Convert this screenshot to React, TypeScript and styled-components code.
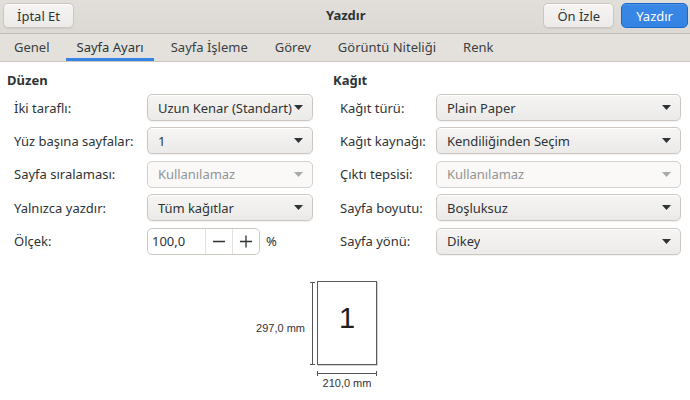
import React from "react";
import styled, { createGlobalStyle, css } from "styled-components";

const Global = createGlobalStyle`
  html, body { margin: 0; padding: 0; background: #ffffff; }
  body { font-family: "Noto Sans", "Open Sans", sans-serif; font-size: 13px; color: #2e3436; }
  * { box-sizing: border-box; }
`;

const Window = styled.div`
  width: 690px;
  height: 400px;
  display: flex;
  flex-direction: column;
  background: #ffffff;
  overflow: hidden;
`;

const HeaderBar = styled.div`
  height: 34px;
  flex: none;
  display: flex;
  align-items: flex-start;
  padding: 3px 2px 0 3px;
  background: linear-gradient(to top, #dcd9d5, #e2dfdb);
  border-bottom: 1px solid #c4bdb6;
`;

const Title = styled.div`
  flex: 1;
  text-align: center;
  font-weight: 700;
  line-height: 25px;
  padding-left: 74px;
`;

const HeaderActions = styled.div`
  display: flex;
  gap: 7px;
`;

const Button = styled.button<{ $primary?: boolean }>`
  height: 25px;
  padding: 0 13px;
  font: inherit;
  line-height: 22px;
  border-radius: 5px;
  border: 1px solid #cdc7c2;
  color: #2e3436;
  background: linear-gradient(to top, #edebe9 2px, #f6f5f4);
  box-shadow: inset 0 1px #ffffff, 0 1px 1px rgba(0, 0, 0, 0.07);
  ${(p) =>
    p.$primary &&
    css`
      padding: 0 14px;
      border-color: #1b6acb;
      color: #ffffff;
      background: linear-gradient(to top, #3584e4 2px, #3987e5);
      box-shadow: inset 0 1px rgba(255, 255, 255, 0.1);
    `}
`;

const TabBar = styled.div`
  height: 28px;
  flex: none;
  display: flex;
  padding-left: 0.5px;
  background: #e4e1dd;
  border-bottom: 1px solid #cdc7c2;
`;

const Tab = styled.div<{ $active?: boolean }>`
  line-height: 27px;
  white-space: nowrap;
  color: ${(p) => (p.$active ? "#2e3436" : "#3a3f41")};
  box-shadow: ${(p) => (p.$active ? "inset 0 -3px #3584e4" : "none")};
  margin: 0 ${(p) => (p.$active ? "3px" : "0")};
  padding: 0 ${(p) => (p.$active ? "10.5px" : "13.5px")};
`;

const Content = styled.div`
  flex: 1;
  display: flex;
  flex-direction: column;
`;

const Columns = styled.div`
  display: flex;
  gap: 20px;
  padding: 8px 9px 0 7px;
`;

const Section = styled.div<{ $width?: number }>`
  ${(p) => (p.$width ? `width: ${p.$width}px;` : "flex: 1;")}
  display: flex;
  flex-direction: column;
  gap: 4px;
`;

const Heading = styled.div`
  font-weight: 700;
  line-height: 20px;
`;

const Grid = styled.div<{ $labelWidth: number }>`
  display: grid;
  grid-template-columns: ${(p) => p.$labelWidth}px minmax(0, 1fr);
  column-gap: 9px;
  row-gap: 6.4px;
  padding-left: 7px;
  align-items: center;
`;

const Label = styled.div`
  white-space: nowrap;
`;

const Combo = styled.div<{ $disabled?: boolean }>`
  height: 27px;
  display: flex;
  align-items: center;
  justify-content: space-between;
  gap: 2px;
  padding: 0 9px 0 10px;
  border-radius: 5px;
  border: 1px solid #cdc7c2;
  background: linear-gradient(to top, #edebe9 2px, #f6f5f4);
  box-shadow: inset 0 1px #ffffff, 0 1px 1px rgba(0, 0, 0, 0.06);
  white-space: nowrap;
  ${(p) =>
    p.$disabled &&
    css`
      color: #929595;
      background: #faf9f8;
      border-color: #d5d0cc;
      box-shadow: none;
    `}
`;

const ComboText = styled.span`
  min-width: 0;
  overflow: hidden;
  letter-spacing: -0.05px;
`;

const ArrowIcon = ({ disabled }: { disabled?: boolean }) => (
  <svg width="9" height="5" viewBox="0 0 9 5" style={{ flex: "none" }}>
    <path d="M0 0 L9 0 L4.5 5 Z" fill={disabled ? "#a7aaab" : "#2e3436"} />
  </svg>
);

const SpinRow = styled.div`
  display: flex;
  align-items: center;
  gap: 6px;
`;

const Spin = styled.div`
  height: 27px;
  width: 113px;
  display: flex;
  border: 1px solid #cdc7c2;
  border-radius: 5px;
  background: #ffffff;
  overflow: hidden;
`;

const SpinValue = styled.div`
  flex: 1;
  padding-left: 4px;
  line-height: 25px;
`;

const SpinButton = styled.div`
  width: 27px;
  display: flex;
  align-items: center;
  justify-content: center;
  border-left: 1px solid #e3e0dd;
`;

const Preview = styled.div`
  flex: 1;
  display: grid;
  grid-template-columns: 1fr auto 1fr;
  align-items: start;
  padding: 26px 0 0 4px;
  font-family: "Liberation Sans", Arial, sans-serif;
  font-size: 11px;
  color: #333333;
`;

const VerticalDim = styled.div`
  display: flex;
  justify-content: flex-end;
  align-items: flex-start;
  gap: 4px;
`;

const DimText = styled.div`
  line-height: 13px;
`;

const VerticalText = styled(DimText)`
  margin-top: 41px;
`;

const PageColumn = styled.div`
  display: flex;
  flex-direction: column;
  align-items: center;
`;

const Page = styled.div`
  width: 60px;
  height: 84px;
  border: 1px solid #5a5a5a;
  background: #ffffff;
  box-shadow: 1px 1px 0 #d2d2d2;
  display: flex;
  align-items: center;
  justify-content: center;
  font-size: 29px;
  color: #1e1e1e;
  padding-bottom: 8px;
`;

const VDimLine = () => (
  <svg width="7" height="86" viewBox="0 0 7 86">
    <path d="M3.5 1 V84 M1 1.5 H6 M1 83.5 H6" stroke="#555" strokeWidth="1" fill="none" />
  </svg>
);

const HDimLine = () => (
  <svg width="62" height="7" viewBox="0 0 62 7" style={{ marginTop: 5 }}>
    <path d="M1 3.5 H61 M1.5 1 V6 M60.5 1 V6" stroke="#555" strokeWidth="1" fill="none" />
  </svg>
);

const MinusIcon = () => (
  <svg width="14" height="14" viewBox="0 0 14 14">
    <path d="M1 7.5 H13" stroke="#2e3436" strokeWidth="1.3" />
  </svg>
);

const PlusIcon = () => (
  <svg width="14" height="14" viewBox="0 0 14 14">
    <path d="M1 7.5 H13 M7 1.5 V13.5" stroke="#2e3436" strokeWidth="1.3" />
  </svg>
);

type Row = { label: string; value: string; disabled?: boolean };

const leftRows: Row[] = [
  { label: "İki taraflı:", value: "Uzun Kenar (Standart)" },
  { label: "Yüz başına sayfalar:", value: "1" },
  { label: "Sayfa sıralaması:", value: "Kullanılamaz", disabled: true },
  { label: "Yalnızca yazdır:", value: "Tüm kağıtlar" },
];

const rightRows: Row[] = [
  { label: "Kağıt türü:", value: "Plain Paper" },
  { label: "Kağıt kaynağı:", value: "Kendiliğinden Seçim" },
  { label: "Çıktı tepsisi:", value: "Kullanılamaz", disabled: true },
  { label: "Sayfa boyutu:", value: "Boşluksuz" },
  { label: "Sayfa yönü:", value: "Dikey" },
];

const tabs = ["Genel", "Sayfa Ayarı", "Sayfa İşleme", "Görev", "Görüntü Niteliği", "Renk"];

const ComboRow = ({ row }: { row: Row }) => (
  <>
    <Label>{row.label}</Label>
    <Combo $disabled={row.disabled}>
      <ComboText>{row.value}</ComboText>
      <ArrowIcon disabled={row.disabled} />
    </Combo>
  </>
);

export default function App() {
  return (
    <Window>
      <Global />
      <HeaderBar>
        <Button>İptal Et</Button>
        <Title>Yazdır</Title>
        <HeaderActions>
          <Button>Ön İzle</Button>
          <Button $primary>Yazdır</Button>
        </HeaderActions>
      </HeaderBar>
      <TabBar>
        {tabs.map((t) => (
          <Tab key={t} $active={t === "Sayfa Ayarı"}>
            {t}
          </Tab>
        ))}
      </TabBar>
      <Content>
        <Columns>
          <Section $width={306}>
            <Heading>Düzen</Heading>
            <Grid $labelWidth={124}>
              {leftRows.map((r) => (
                <ComboRow key={r.label} row={r} />
              ))}
              <Label>Ölçek:</Label>
              <SpinRow>
                <Spin>
                  <SpinValue>100,0</SpinValue>
                  <SpinButton>
                    <MinusIcon />
                  </SpinButton>
                  <SpinButton>
                    <PlusIcon />
                  </SpinButton>
                </Spin>
                <span>%</span>
              </SpinRow>
            </Grid>
          </Section>
          <Section>
            <Heading>Kağıt</Heading>
            <Grid $labelWidth={87}>
              {rightRows.map((r) => (
                <ComboRow key={r.label} row={r} />
              ))}
            </Grid>
          </Section>
        </Columns>
        <Preview>
          <VerticalDim>
            <VerticalText>297,0 mm</VerticalText>
            <VDimLine />
          </VerticalDim>
          <PageColumn>
            <Page>1</Page>
            <HDimLine />
            <DimText>210,0 mm</DimText>
          </PageColumn>
        </Preview>
      </Content>
    </Window>
  );
}
